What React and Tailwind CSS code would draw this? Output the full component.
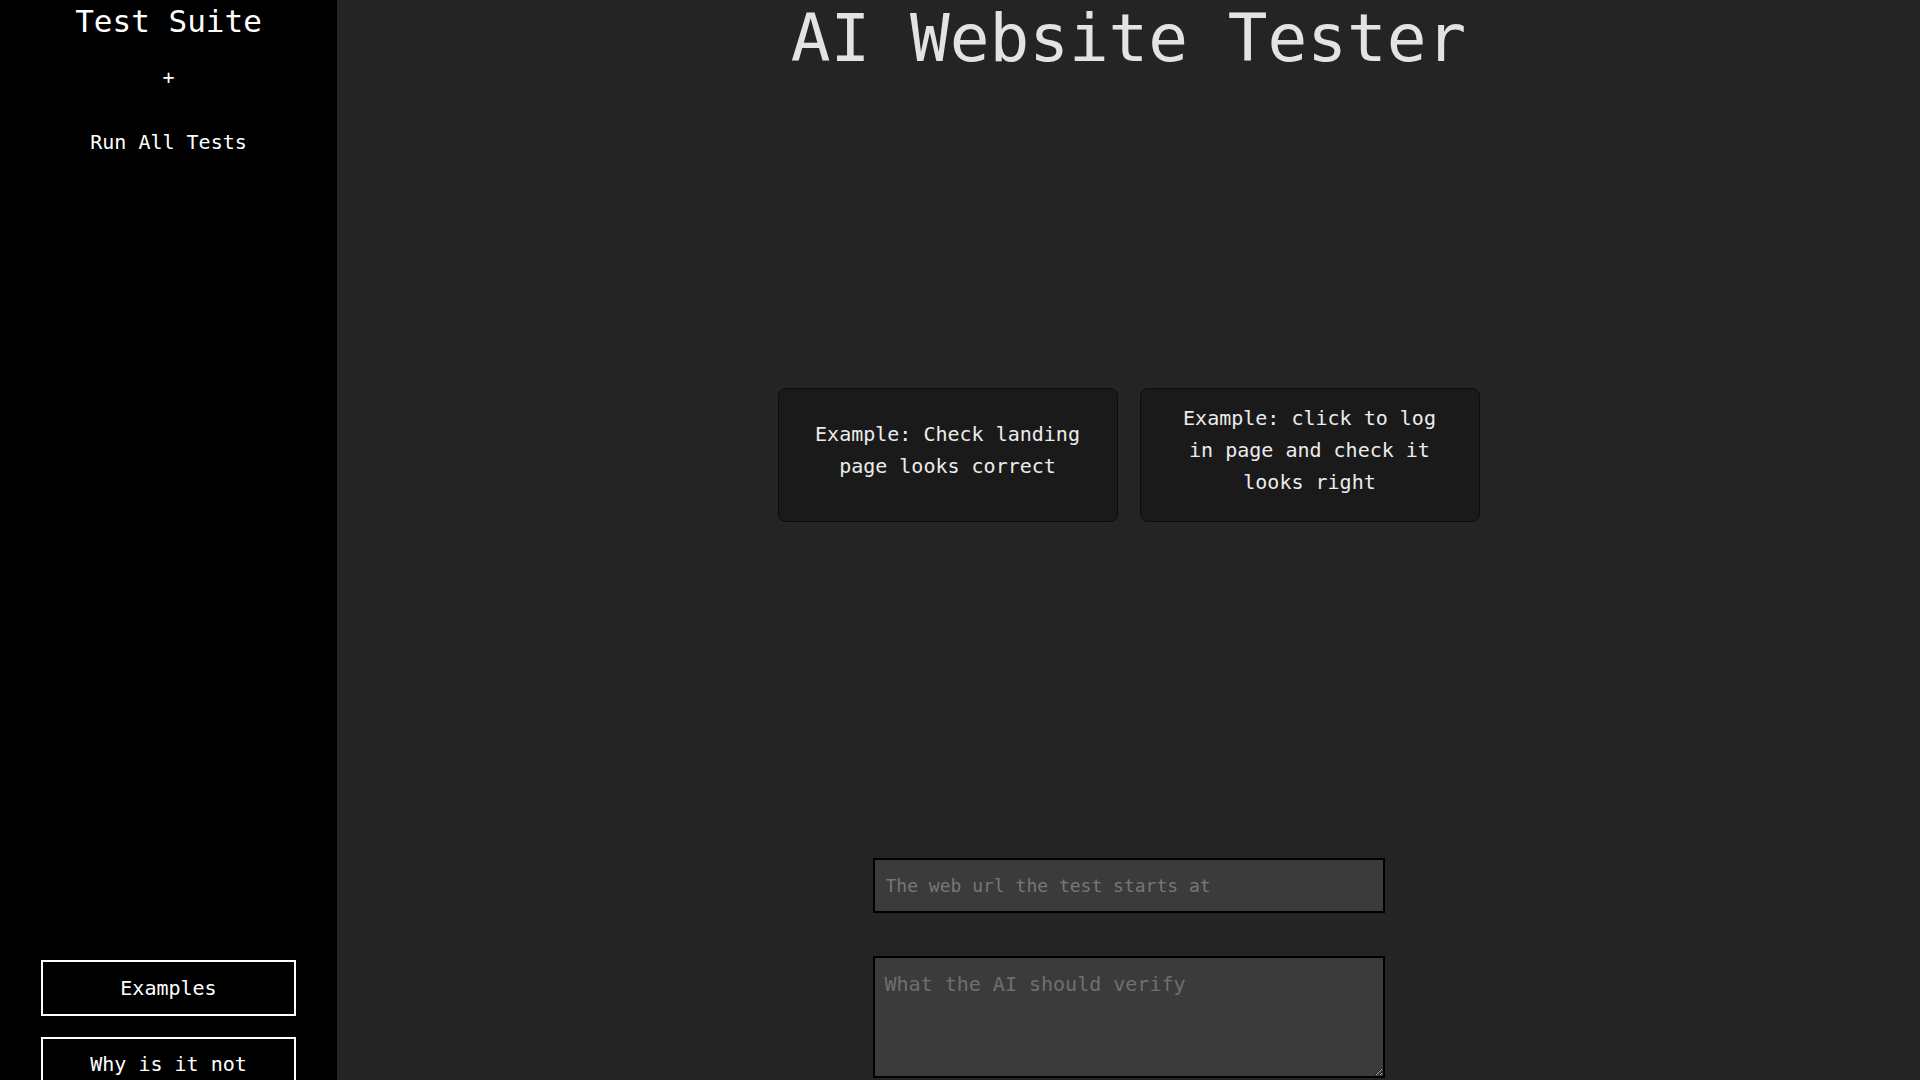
import React, { useState } from "react";

const mono = "font-['DejaVu_Sans_Mono','Liberation_Mono',monospace]";

const examples = [
  "Example: Check landing page looks correct",
  "Example: click to log in page and check it looks right",
];

const Sidebar = () => (
  <aside className="w-[337px] shrink-0 h-screen overflow-hidden bg-black text-white flex flex-col items-center">
    <h2 className="pt-[4px] text-[31px] leading-[35px]">Test Suite</h2>
    <button className="mt-[27px] text-[20px] leading-[23px]">+</button>
    <button className="mt-[42px] text-[20px] leading-[23px]">Run All Tests</button>
    <div className="mt-[806px] flex flex-col gap-[21px] items-center">
      <button className="w-[255px] h-[56px] border-2 border-white text-[20px] leading-[23px]">
        Examples
      </button>
      <button className="w-[255px] border-2 border-white pt-[10px] pb-[10px] px-[14px] text-[20px] leading-[30px]">
        Why is it not working?
      </button>
    </div>
  </aside>
);

const App = () => {
  const [url, setUrl] = useState("");
  const [prompt, setPrompt] = useState("");

  return (
    <div className={`flex h-screen w-full overflow-hidden bg-[#242424] ${mono}`}>
      <Sidebar />
      <main className="flex-1 flex flex-col items-center text-[#e3e3e3]">
        <h1 className="text-[66px] leading-[77px]">AI Website Tester</h1>

        <div className="mt-[311px] flex gap-[22px]">
          {examples.map((text) => (
            <button
              key={text}
              onClick={() => setPrompt(text)}
              className="w-[340px] h-[134px] px-[28px] pb-[10px] flex items-center justify-center rounded-[8px] border border-[#0d0d0d] bg-[#1a1a1a] text-[20px] leading-[32px] text-center text-[#ececec]"
            >
              {text}
            </button>
          ))}
        </div>

        <input
          value={url}
          onChange={(e) => setUrl(e.target.value)}
          placeholder="The web url the test starts at"
          className="mt-[336px] w-[512px] h-[55px] px-[11px] border-2 border-black bg-[#3b3b3b] text-[18px] text-[#e6e6e6] placeholder:text-[#777777] outline-none"
        />
        <textarea
          value={prompt}
          onChange={(e) => setPrompt(e.target.value)}
          placeholder="What the AI should verify"
          className="mt-[43px] w-[512px] h-[122px] px-[10px] pt-[15px] pb-[10px] border-2 border-black bg-[#3b3b3b] text-[20px] leading-[23px] text-[#e6e6e6] placeholder:text-[#6f6f6f] outline-none"
        />
      </main>
    </div>
  );
};

export default App;
